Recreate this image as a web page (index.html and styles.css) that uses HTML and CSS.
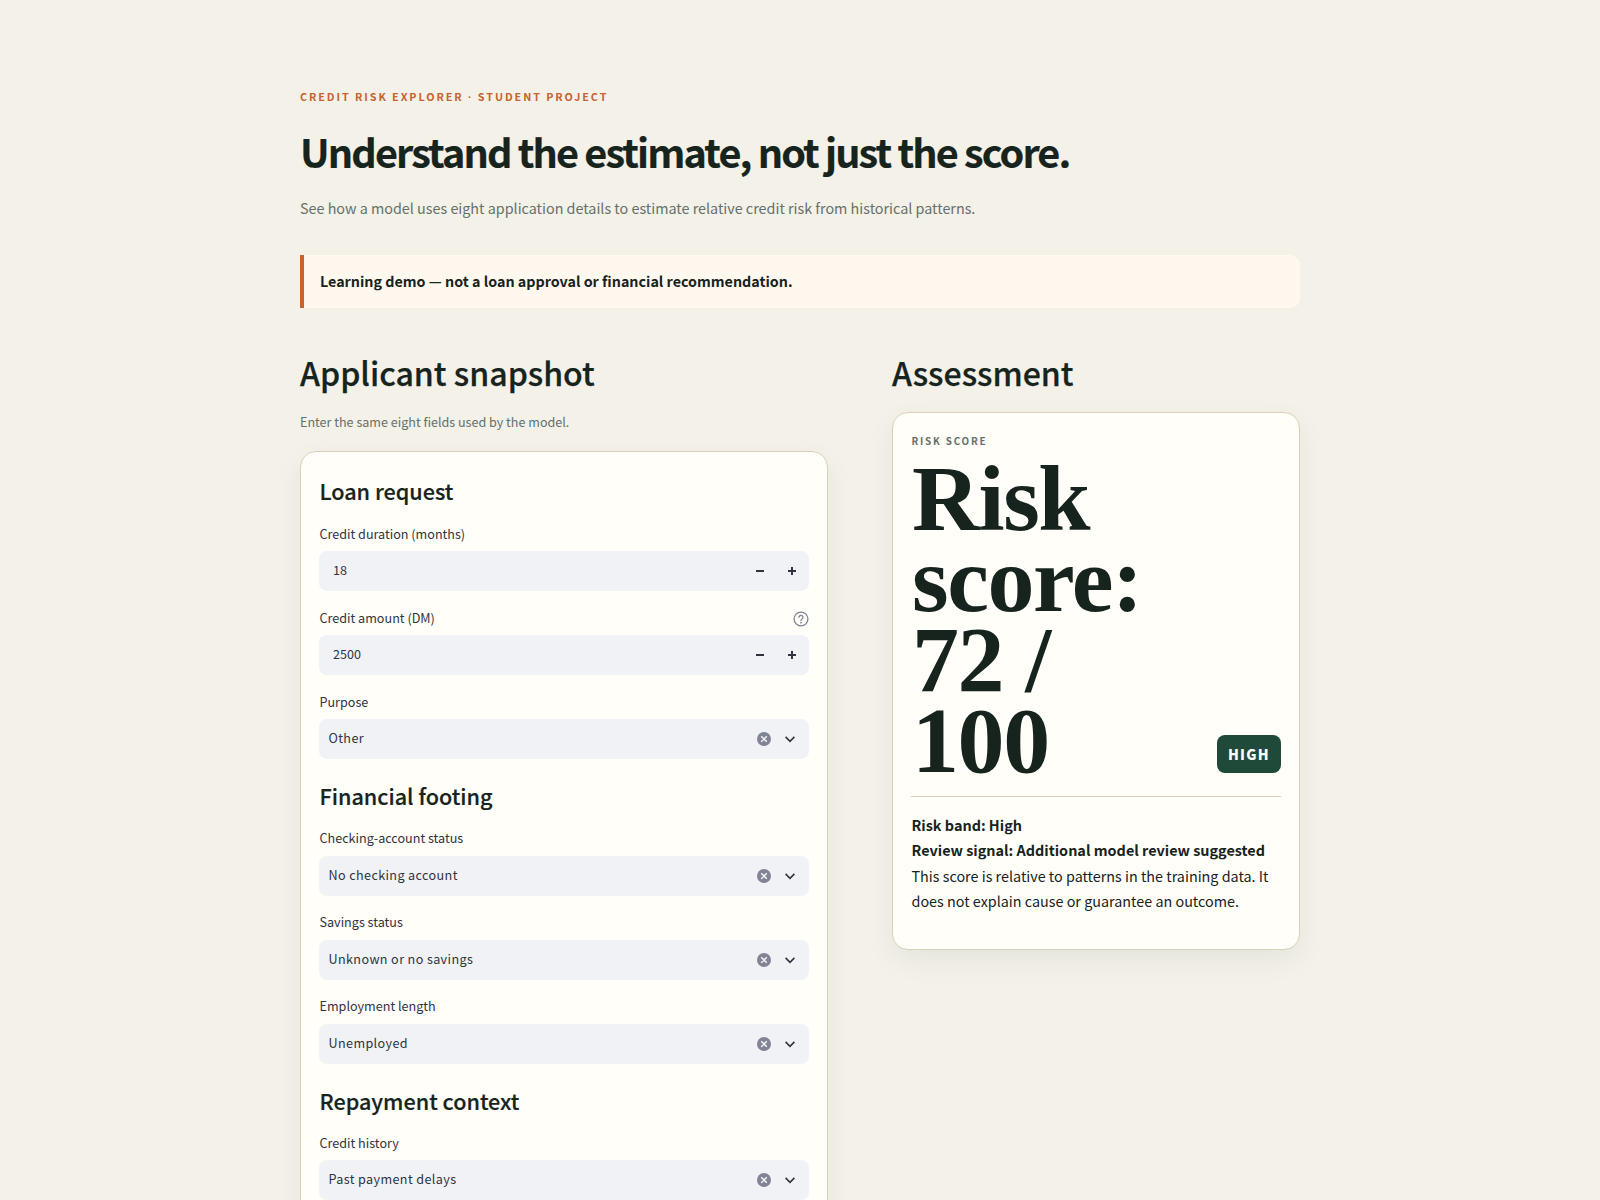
FILE: index.html
```html
<!DOCTYPE html>
<html lang="en">
<head>
<meta charset="utf-8">
<title>Credit Risk Explorer</title>
<link rel="stylesheet" href="styles.css">
</head>
<body>
<main class="app">
  <div class="page">
    <p class="eyebrow">CREDIT RISK EXPLORER <span class="mid">·</span> STUDENT PROJECT</p>
    <h1 class="title">Understand the estimate, not just the score.</h1>
    <p class="subtitle">See how a model uses eight application details to estimate relative credit risk from historical patterns.</p>
    <div class="notice">Learning demo — not a loan approval or financial recommendation.</div>
    <div class="columns">
      <section class="col-form">
        <h2 class="section-title">Applicant snapshot</h2>
        <p class="caption">Enter the same eight fields used by the model.</p>
        <div class="card form-card">
          <h3 class="group-title first">Loan request</h3>
          <div class="field">
            <div class="label-row"><label class="label">Credit duration (months)</label></div>
            <div class="input">
              <span class="num-value">18</span>
              <svg class="step minus" viewBox="0 0 10 10"><path d="M1 5h8"/></svg>
              <svg class="step plus" viewBox="0 0 10 10"><path d="M1 5h8M5 1v8"/></svg>
            </div>
          </div>
          <div class="field">
            <div class="label-row">
              <label class="label">Credit amount (DM)</label>
              <svg class="help" viewBox="0 0 16 16"><circle cx="8" cy="8" r="6.9"/><path d="M6 6.3a2 2 0 1 1 3 1.75c-.7.4-1 .8-1 1.5"/><circle class="dot" cx="8" cy="11.7" r=".9"/></svg>
            </div>
            <div class="input">
              <span class="num-value">2500</span>
              <svg class="step minus" viewBox="0 0 10 10"><path d="M1 5h8"/></svg>
              <svg class="step plus" viewBox="0 0 10 10"><path d="M1 5h8M5 1v8"/></svg>
            </div>
          </div>
          <div class="field">
            <div class="label-row"><label class="label">Purpose</label></div>
            <div class="input select">
              <span class="sel-value">Other</span>
              <svg class="clear" viewBox="0 0 14 14"><circle cx="7" cy="7" r="7"/><path d="M4.7 4.7l4.6 4.6M9.3 4.7l-4.6 4.6"/></svg>
              <svg class="chev" viewBox="0 0 12 12"><path d="M1.6 3.9L6 8.3l4.4-4.4"/></svg>
            </div>
          </div>
          <h3 class="group-title">Financial footing</h3>
          <div class="field roomy">
            <div class="label-row"><label class="label">Checking-account status</label></div>
            <div class="input select">
              <span class="sel-value">No checking account</span>
              <svg class="clear" viewBox="0 0 14 14"><circle cx="7" cy="7" r="7"/><path d="M4.7 4.7l4.6 4.6M9.3 4.7l-4.6 4.6"/></svg>
              <svg class="chev" viewBox="0 0 12 12"><path d="M1.6 3.9L6 8.3l4.4-4.4"/></svg>
            </div>
          </div>
          <div class="field roomy">
            <div class="label-row"><label class="label">Savings status</label></div>
            <div class="input select">
              <span class="sel-value">Unknown or no savings</span>
              <svg class="clear" viewBox="0 0 14 14"><circle cx="7" cy="7" r="7"/><path d="M4.7 4.7l4.6 4.6M9.3 4.7l-4.6 4.6"/></svg>
              <svg class="chev" viewBox="0 0 12 12"><path d="M1.6 3.9L6 8.3l4.4-4.4"/></svg>
            </div>
          </div>
          <div class="field roomy">
            <div class="label-row"><label class="label">Employment length</label></div>
            <div class="input select">
              <span class="sel-value">Unemployed</span>
              <svg class="clear" viewBox="0 0 14 14"><circle cx="7" cy="7" r="7"/><path d="M4.7 4.7l4.6 4.6M9.3 4.7l-4.6 4.6"/></svg>
              <svg class="chev" viewBox="0 0 12 12"><path d="M1.6 3.9L6 8.3l4.4-4.4"/></svg>
            </div>
          </div>
          <h3 class="group-title">Repayment context</h3>
          <div class="field">
            <div class="label-row"><label class="label">Credit history</label></div>
            <div class="input select">
              <span class="sel-value">Past payment delays</span>
              <svg class="clear" viewBox="0 0 14 14"><circle cx="7" cy="7" r="7"/><path d="M4.7 4.7l4.6 4.6M9.3 4.7l-4.6 4.6"/></svg>
              <svg class="chev" viewBox="0 0 12 12"><path d="M1.6 3.9L6 8.3l4.4-4.4"/></svg>
            </div>
          </div>
        </div>
      </section>
      <section class="col-result">
        <h2 class="section-title">Assessment</h2>
        <div class="card result-card">
          <p class="kicker">RISK SCORE</p>
          <div class="score-row">
            <div class="score">Risk score: 72 / 100</div>
            <span class="badge">HIGH</span>
          </div>
          <div class="details">
            <p class="strong">Risk band: High</p>
            <p class="strong">Review signal: Additional model review suggested</p>
            <p class="body-text">This score is relative to patterns in the training data. It does not explain cause or guarantee an outcome.</p>
          </div>
        </div>
      </section>
    </div>
  </div>
</main>
</body>
</html>
```

FILE: styles.css
```css
* { box-sizing: border-box; }
html, body { margin: 0; padding: 0; height: 100%; overflow: hidden; }
body {
  background: #f3f1e8;
  color: #17231d;
  font-family: "Noto Sans CJK SC", "Noto Sans", sans-serif;
}
p, h1, h2, h3 { margin: 0; }
.app { height: 100vh; overflow: hidden; }
.page { width: 1000px; margin: 0 auto; padding-top: 87px; }
.eyebrow {
  font-size: 10.8px; line-height: 18px; font-weight: 700;
  letter-spacing: 1.92px; color: #c8622f;
}
.mid { font-family: "Liberation Sans", sans-serif; }
.title {
  margin-top: 17px;
  font-size: 39.6px; line-height: 56px; font-weight: 700;
  letter-spacing: -1.85px; color: #17231d;
  -webkit-text-stroke: 0.2px #17231d;
}
.subtitle {
  margin-top: 16px;
  font-size: 14.35px; line-height: 26px; color: #66706a;
}
.notice {
  margin-top: 34px; height: 53px;
  display: flex; align-items: center;
  padding-left: 16px; padding-bottom: 2px;
  background: #fff8ef;
  border-left: 4px solid #c8622f;
  border-radius: 0 10px 10px 0;
  font-size: 14.3px; font-weight: 700; color: #17231d;
}
.columns {
  margin-top: 37px;
  display: grid; grid-template-columns: 528px 408px; column-gap: 64px;
  align-items: start;
}
.section-title {
  font-size: 32.1px; line-height: 54px; font-weight: 500; color: #17231d;
  -webkit-text-stroke: 0.25px #17231d;
}
.caption {
  margin-top: 13px;
  font-size: 12.57px; line-height: 20px; color: #66706a;
}
.card {
  background: #fffef9;
  border: 1px solid #d9d0ba;
  border-radius: 16px;
  box-shadow: 0 10px 30px rgba(23, 35, 29, 0.06);
}
.form-card { margin-top: 19px; padding: 25px 18px 24px; }
.group-title {
  margin-top: 23px; margin-bottom: 19px; padding-left: 0.5px;
  font-size: 21.6px; line-height: 28px; font-weight: 500; color: #17231d;
  -webkit-text-stroke: 0.2px #17231d;
}
.group-title.first { margin-top: 0; margin-bottom: 20px; }
.field + .field { margin-top: 18px; }
.field.roomy + .field.roomy { margin-top: 17px; }
.label-row {
  display: flex; align-items: center; justify-content: space-between;
  height: 20px; margin-bottom: 6px;
}
.roomy .label-row { margin-bottom: 7px; }
.label { font-size: 12.6px; line-height: 20px; color: #31333f; padding: 0 0 2px 0.5px; }
.help { width: 16px; height: 16px; fill: none; stroke: #808495; stroke-width: 1.3; stroke-linecap: round; }
.help .dot { fill: #808495; stroke: none; }
.input {
  height: 40px; border-radius: 8px; background: #f0f2f6;
  display: flex; align-items: center;
  color: #31333f; font-size: 12.6px; line-height: 20px;
}
.num-value { flex: 1; padding-left: 14px; padding-bottom: 3px; }
.step { width: 10px; height: 10px; fill: none; stroke: #31333f; stroke-width: 2; }
.minus { margin-right: 22px; }
.plus { margin-right: 12px; }
.sel-value { flex: 1; padding-left: 9.5px; padding-bottom: 3px; letter-spacing: 0.38px; }
.clear { width: 14px; height: 14px; margin-right: 13px; }
.clear circle { fill: #808495; }
.clear path { stroke: #f0f2f6; stroke-width: 1.6; stroke-linecap: round; fill: none; }
.chev { width: 12px; height: 12px; margin-right: 13px; fill: none; stroke: #31333f; stroke-width: 1.6; }
.result-card { margin-top: 13px; padding: 20px 18px 35px; }
.kicker {
  padding-left: 0.5px;
  font-size: 9.9px; line-height: 16px; font-weight: 700;
  letter-spacing: 1.8px; color: #66706a;
}
.score-row { display: flex; align-items: flex-end; justify-content: space-between; gap: 16px; margin-top: 9px; }
.score {
  flex: none; width: 280px; padding-left: 1px;
  font-family: "Liberation Serif", serif;
  font-size: 94px; line-height: 80.5px; font-weight: 700;
  letter-spacing: -0.015em; color: #17231d;
}
.badge {
  flex: none; height: 38px; width: 64px; margin-bottom: 7px;
  display: flex; align-items: center; justify-content: center;
  border-radius: 8px; background: #1f4a3a; color: #ffffff;
  font-size: 14px; font-weight: 900; letter-spacing: 1.3px;
}
.details {
  margin-top: 16px; padding-top: 15px; padding-left: 0.5px;
  border-top: 1px solid #d9d0ba;
  font-size: 14.42px; line-height: 25.4px; color: #17231d;
}
.strong { font-weight: 700; }
.body-text { font-size: 14.36px; }
```
